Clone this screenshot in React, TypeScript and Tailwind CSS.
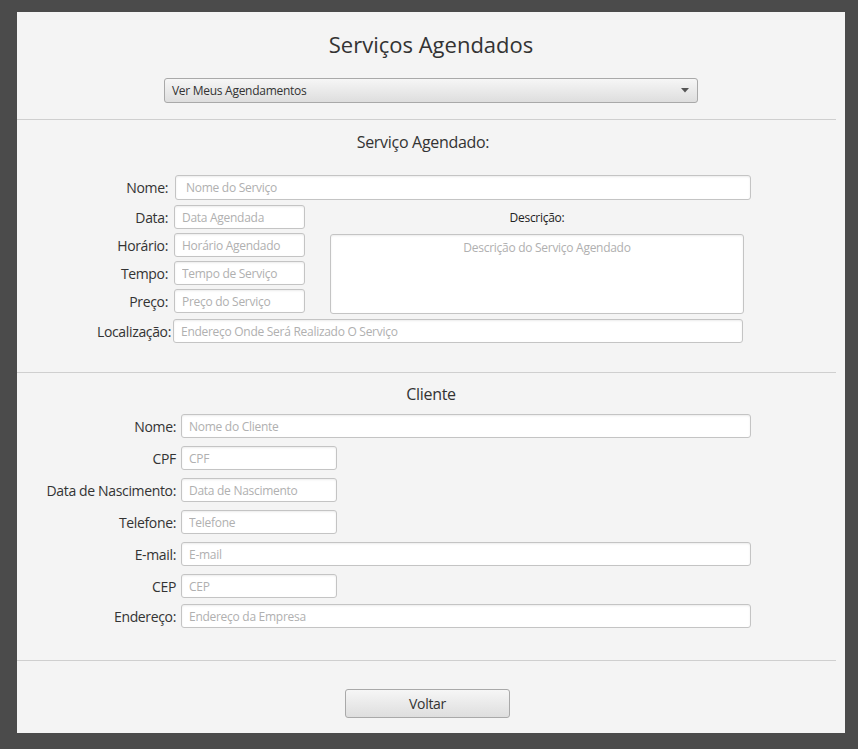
import React from 'react';

const font = { fontFamily: '"Open Sans", "Noto Sans", sans-serif' };

function Field({ placeholder, w, h = 24, pl = 7 }: { placeholder: string; w: number; h?: number; pl?: number }) {
  return (
    <input
      readOnly
      placeholder={placeholder}
      style={{ width: w, height: h, paddingLeft: pl }}
      className="rounded-[3px] border border-[#c4c4c4] bg-white text-[12px] tracking-[-0.28px] text-[#333] placeholder:text-[#b0b0b0] shadow-[inset_0_1px_2px_rgba(0,0,0,0.08)] outline-none"
    />
  );
}

function Row({
  label,
  labelW,
  gap,
  children,
  className = '',
}: {
  label: string;
  labelW: number;
  gap: number;
  children: React.ReactNode;
  className?: string;
}) {
  return (
    <div className={`flex items-center ${className}`}>
      <span
        style={{ width: labelW, marginRight: gap }}
        className="shrink-0 text-right text-[14px] tracking-[-0.35px] text-[#333] whitespace-nowrap"
      >
        {label}
      </span>
      {children}
    </div>
  );
}

export default function App() {
  const clientRows: { label: string; ph: string; w: number }[] = [
    { label: 'Nome:', ph: 'Nome do Cliente', w: 570 },
    { label: 'CPF', ph: 'CPF', w: 156 },
    { label: 'Data de Nascimento:', ph: 'Data de Nascimento', w: 156 },
    { label: 'Telefone:', ph: 'Telefone', w: 156 },
    { label: 'E-mail:', ph: 'E-mail', w: 570 },
    { label: 'CEP', ph: 'CEP', w: 156 },
  ];

  return (
    <div className="w-[858px] h-[749px] bg-[#4b4b4b] pt-[12px] pl-[17px]" style={font}>
      <div className="w-[828px] h-[721px] bg-[#f4f4f4] flex flex-col">
        {/* header */}
        <h1 className="mt-[18px] h-[28px] leading-[28px] text-center text-[22px] text-[#333]">Serviços Agendados</h1>
        <div className="mt-[20px] ml-[147px] w-[534px] h-[25px] rounded-[3px] border border-[#a9a9a9] bg-gradient-to-b from-[#f6f6f6] to-[#dedede] flex items-center justify-between pl-[7px] pr-[8px]">
          <span className="text-[12px] tracking-[-0.28px] text-[#333]">Ver Meus Agendamentos</span>
          <svg width="8" height="5" viewBox="0 0 8 5">
            <path d="M0 0 H8 L4 4.5 Z" fill="#555" />
          </svg>
        </div>
        <div className="mt-[16px] h-px w-[819px] bg-[#cfcfcf]" />

        {/* servico agendado */}
        <h2 className="mt-[11px] h-[22px] leading-[22px] text-center text-[16px] tracking-[-0.3px] text-[#333] pr-[16px]">
          Serviço Agendado:
        </h2>
        <Row label="Nome:" labelW={151} gap={7} className="mt-[22px]">
          <Field placeholder="Nome do Serviço" w={576} h={25} pl={10} />
        </Row>
        <div className="mt-[5px] flex">
          <div className="flex flex-col gap-[4px]">
            <Row label="Data:" labelW={151} gap={6}>
              <Field placeholder="Data Agendada" w={131} />
            </Row>
            <Row label="Horário:" labelW={151} gap={6}>
              <Field placeholder="Horário Agendado" w={131} />
            </Row>
            <Row label="Tempo:" labelW={151} gap={6}>
              <Field placeholder="Tempo de Serviço" w={131} />
            </Row>
            <Row label="Preço:" labelW={151} gap={6}>
              <Field placeholder="Preço do Serviço" w={131} />
            </Row>
          </div>
          <div className="ml-[25px] w-[414px] flex flex-col items-center">
            <span className="mt-[5px] h-[16px] leading-[16px] text-[12px] tracking-[-0.28px] text-[#222]">Descrição:</span>
            <textarea
              readOnly
              placeholder="Descrição do Serviço Agendado"
              className="mt-[8px] w-[414px] h-[80px] resize-none rounded-[3px] border border-[#c4c4c4] bg-white text-center text-[12px] tracking-[-0.28px] pt-[4px] pl-[20px] placeholder:text-[#b0b0b0] shadow-[inset_0_1px_2px_rgba(0,0,0,0.08)] outline-none"
            />
          </div>
        </div>
        <Row label="Localização:" labelW={154} gap={2} className="mt-[5px]">
          <Field placeholder="Endereço Onde Será Realizado O Serviço" w={570} />
        </Row>
        <div className="mt-[29px] h-px w-[819px] bg-[#cfcfcf]" />

        {/* cliente */}
        <h2 className="mt-[10px] h-[22px] leading-[22px] text-center text-[16px] tracking-[-0.3px] text-[#333]">Cliente</h2>
        <div className="mt-[9px] flex flex-col gap-[8px]">
          {clientRows.map((r) => (
            <Row key={r.label} label={r.label} labelW={159} gap={5}>
              <Field placeholder={r.ph} w={r.w} />
            </Row>
          ))}
        </div>
        <Row label="Endereço:" labelW={159} gap={5} className="mt-[6px]">
          <Field placeholder="Endereço da Empresa" w={570} />
        </Row>
        <div className="mt-[32px] h-px w-[819px] bg-[#cfcfcf]" />

        <button className="mt-[28px] ml-[328px] w-[165px] h-[29px] rounded-[3px] border border-[#a9a9a9] bg-gradient-to-b from-[#f6f6f6] to-[#dedede] text-[14px] tracking-[-0.3px] text-[#333]">
          Voltar
        </button>
      </div>
    </div>
  );
}
